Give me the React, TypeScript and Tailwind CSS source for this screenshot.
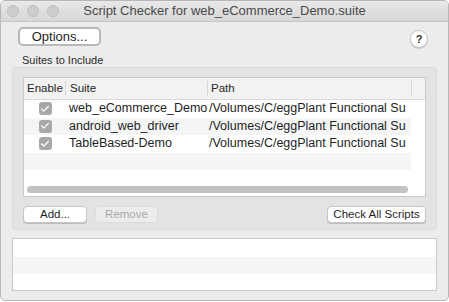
import { Check } from "lucide-react";

const suites = [
  { name: "web_eCommerce_Demo", path: "/Volumes/C/eggPlant Functional Su" },
  { name: "android_web_driver", path: "/Volumes/C/eggPlant Functional Su" },
  { name: "TableBased-Demo", path: "/Volumes/C/eggPlant Functional Su" },
];

function Light() {
  return <span className="h-[12px] w-[12px] rounded-full border border-[#bdbdbd] bg-[#cdcdcd]" />;
}

function Btn({ label, w, disabled }: { label: string; w: string; disabled?: boolean }) {
  return (
    <button
      className={`flex h-[17px] ${w} items-center justify-center rounded-[4px] border text-[11.5px] leading-none ${
        disabled
          ? "border-[#dcdcdc] bg-[#ececec] text-[#a8a8a8]"
          : "border-[#c6c6c6] bg-white text-[#1f1f1f] shadow-[0_1px_0_#bdbdbd]"
      }`}
    >
      {label}
    </button>
  );
}

export default function App() {
  return (
    <div className="h-[302px] w-[449px] bg-white font-['Liberation_Sans',Arial,sans-serif]">
      <div className="flex h-[301px] w-[449px] flex-col overflow-hidden rounded-[5px] border border-[#b7b7b7] bg-[#ececec]">
        {/* title bar */}
        <div className="grid h-[21px] shrink-0 grid-cols-[1fr_auto_1fr] items-center border-b border-[#c6c6c6] bg-gradient-to-b from-[#e9e9e9] to-[#d6d6d6]">
          <div className="flex items-center gap-[8px] pl-[6px]">
            <Light />
            <Light />
            <Light />
          </div>
          <div className="text-[13px] text-[#4a4a4a]">Script Checker for web_eCommerce_Demo.suite</div>
          <div />
        </div>

        <div className="flex flex-1 flex-col px-[11px]">
          {/* top row */}
          <div className="mt-[5px] flex items-start justify-between pl-[6px] pr-[9px]">
            <button className="flex h-[19px] w-[83px] items-center justify-center rounded-[5px] border-2 border-[#b9b9b9] bg-white text-[13px] text-[#1f1f1f]">
              Options...
            </button>
            <span className="mt-[3px] flex h-[18px] w-[18px] items-center justify-center rounded-full border border-[#c4c4c4] bg-white text-[11px] font-bold text-[#333] shadow-[0_1px_0_#c9c9c9]">
              ?
            </span>
          </div>

          <div className="mt-[6px] pl-[10px] text-[11px] leading-[13px] text-[#2b2b2b]">Suites to Include</div>

          {/* group */}
          <div className="flex h-[163px] flex-col rounded-[4px] border border-[#dadada] bg-[#e3e3e3] px-[10px] pt-[9px]">
            <div className="flex h-[120px] flex-col border border-[#c9c9c9] bg-white">
              <div className="flex h-[22px] shrink-0 border-b border-[#dadada] bg-[#f2f2f2] text-[11.5px] text-[#262626]">
                <div className="flex w-[41px] items-center pl-[3px]">Enable</div>
                <div className="my-[3px] w-px bg-[#d6d6d6]" />
                <div className="flex w-[141px] items-center pl-[4px]">Suite</div>
                <div className="my-[3px] w-px bg-[#d6d6d6]" />
                <div className="flex w-[203px] items-center pl-[3px]">Path</div>
                <div className="my-[3px] w-px bg-[#d6d6d6]" />
                <div className="flex-1" />
              </div>
              <div className="flex flex-1 overflow-hidden">
                <div className="flex w-[387px] flex-col">
                  <div className="flex-1 overflow-hidden">
                    {[0, 1, 2, 3, 4].map((i) => {
                      const s = suites[i];
                      return (
                        <div
                          key={i}
                          className={`flex h-[17.5px] items-center text-[12.5px] text-[#1e1e1e] ${
                            i % 2 ? "bg-[#f4f5f5]" : "bg-white"
                          }`}
                        >
                          {s && (
                            <>
                              <div className="flex w-[42px] justify-center">
                                <span className="flex h-[13px] w-[13px] items-center justify-center rounded-[3px] bg-[#a8a8a8]">
                                  <Check size={10} strokeWidth={3} color="white" />
                                </span>
                              </div>
                              <div className="w-[142px] whitespace-nowrap pl-[3px]">{s.name}</div>
                              <div className="w-[203px] whitespace-nowrap pl-[1px]">{s.path}</div>
                            </>
                          )}
                        </div>
                      );
                    })}
                  </div>
                  <div className="flex h-[14px] shrink-0 items-center pl-[3px]">
                    <div className="h-[7px] w-[381px] rounded-full bg-[#c2c2c2]" />
                  </div>
                </div>
                <div className="flex-1 bg-white" />
              </div>
            </div>

            <div className="mt-[9px] flex items-center">
              <Btn label="Add..." w="w-[64px]" />
              <div className="w-[8px]" />
              <Btn label="Remove" w="w-[63px]" disabled />
              <div className="flex-1" />
              <Btn label="Check All Scripts" w="w-[99px]" />
            </div>
          </div>

          {/* log field */}
          <div className="mt-[8px] flex h-[53px] flex-col border border-[#c8c8c8] bg-white">
            <div className="h-[18px] bg-white" />
            <div className="h-[17px] bg-[#f4f5f5]" />
            <div className="flex-1 bg-white" />
          </div>
        </div>
      </div>
    </div>
  );
}
